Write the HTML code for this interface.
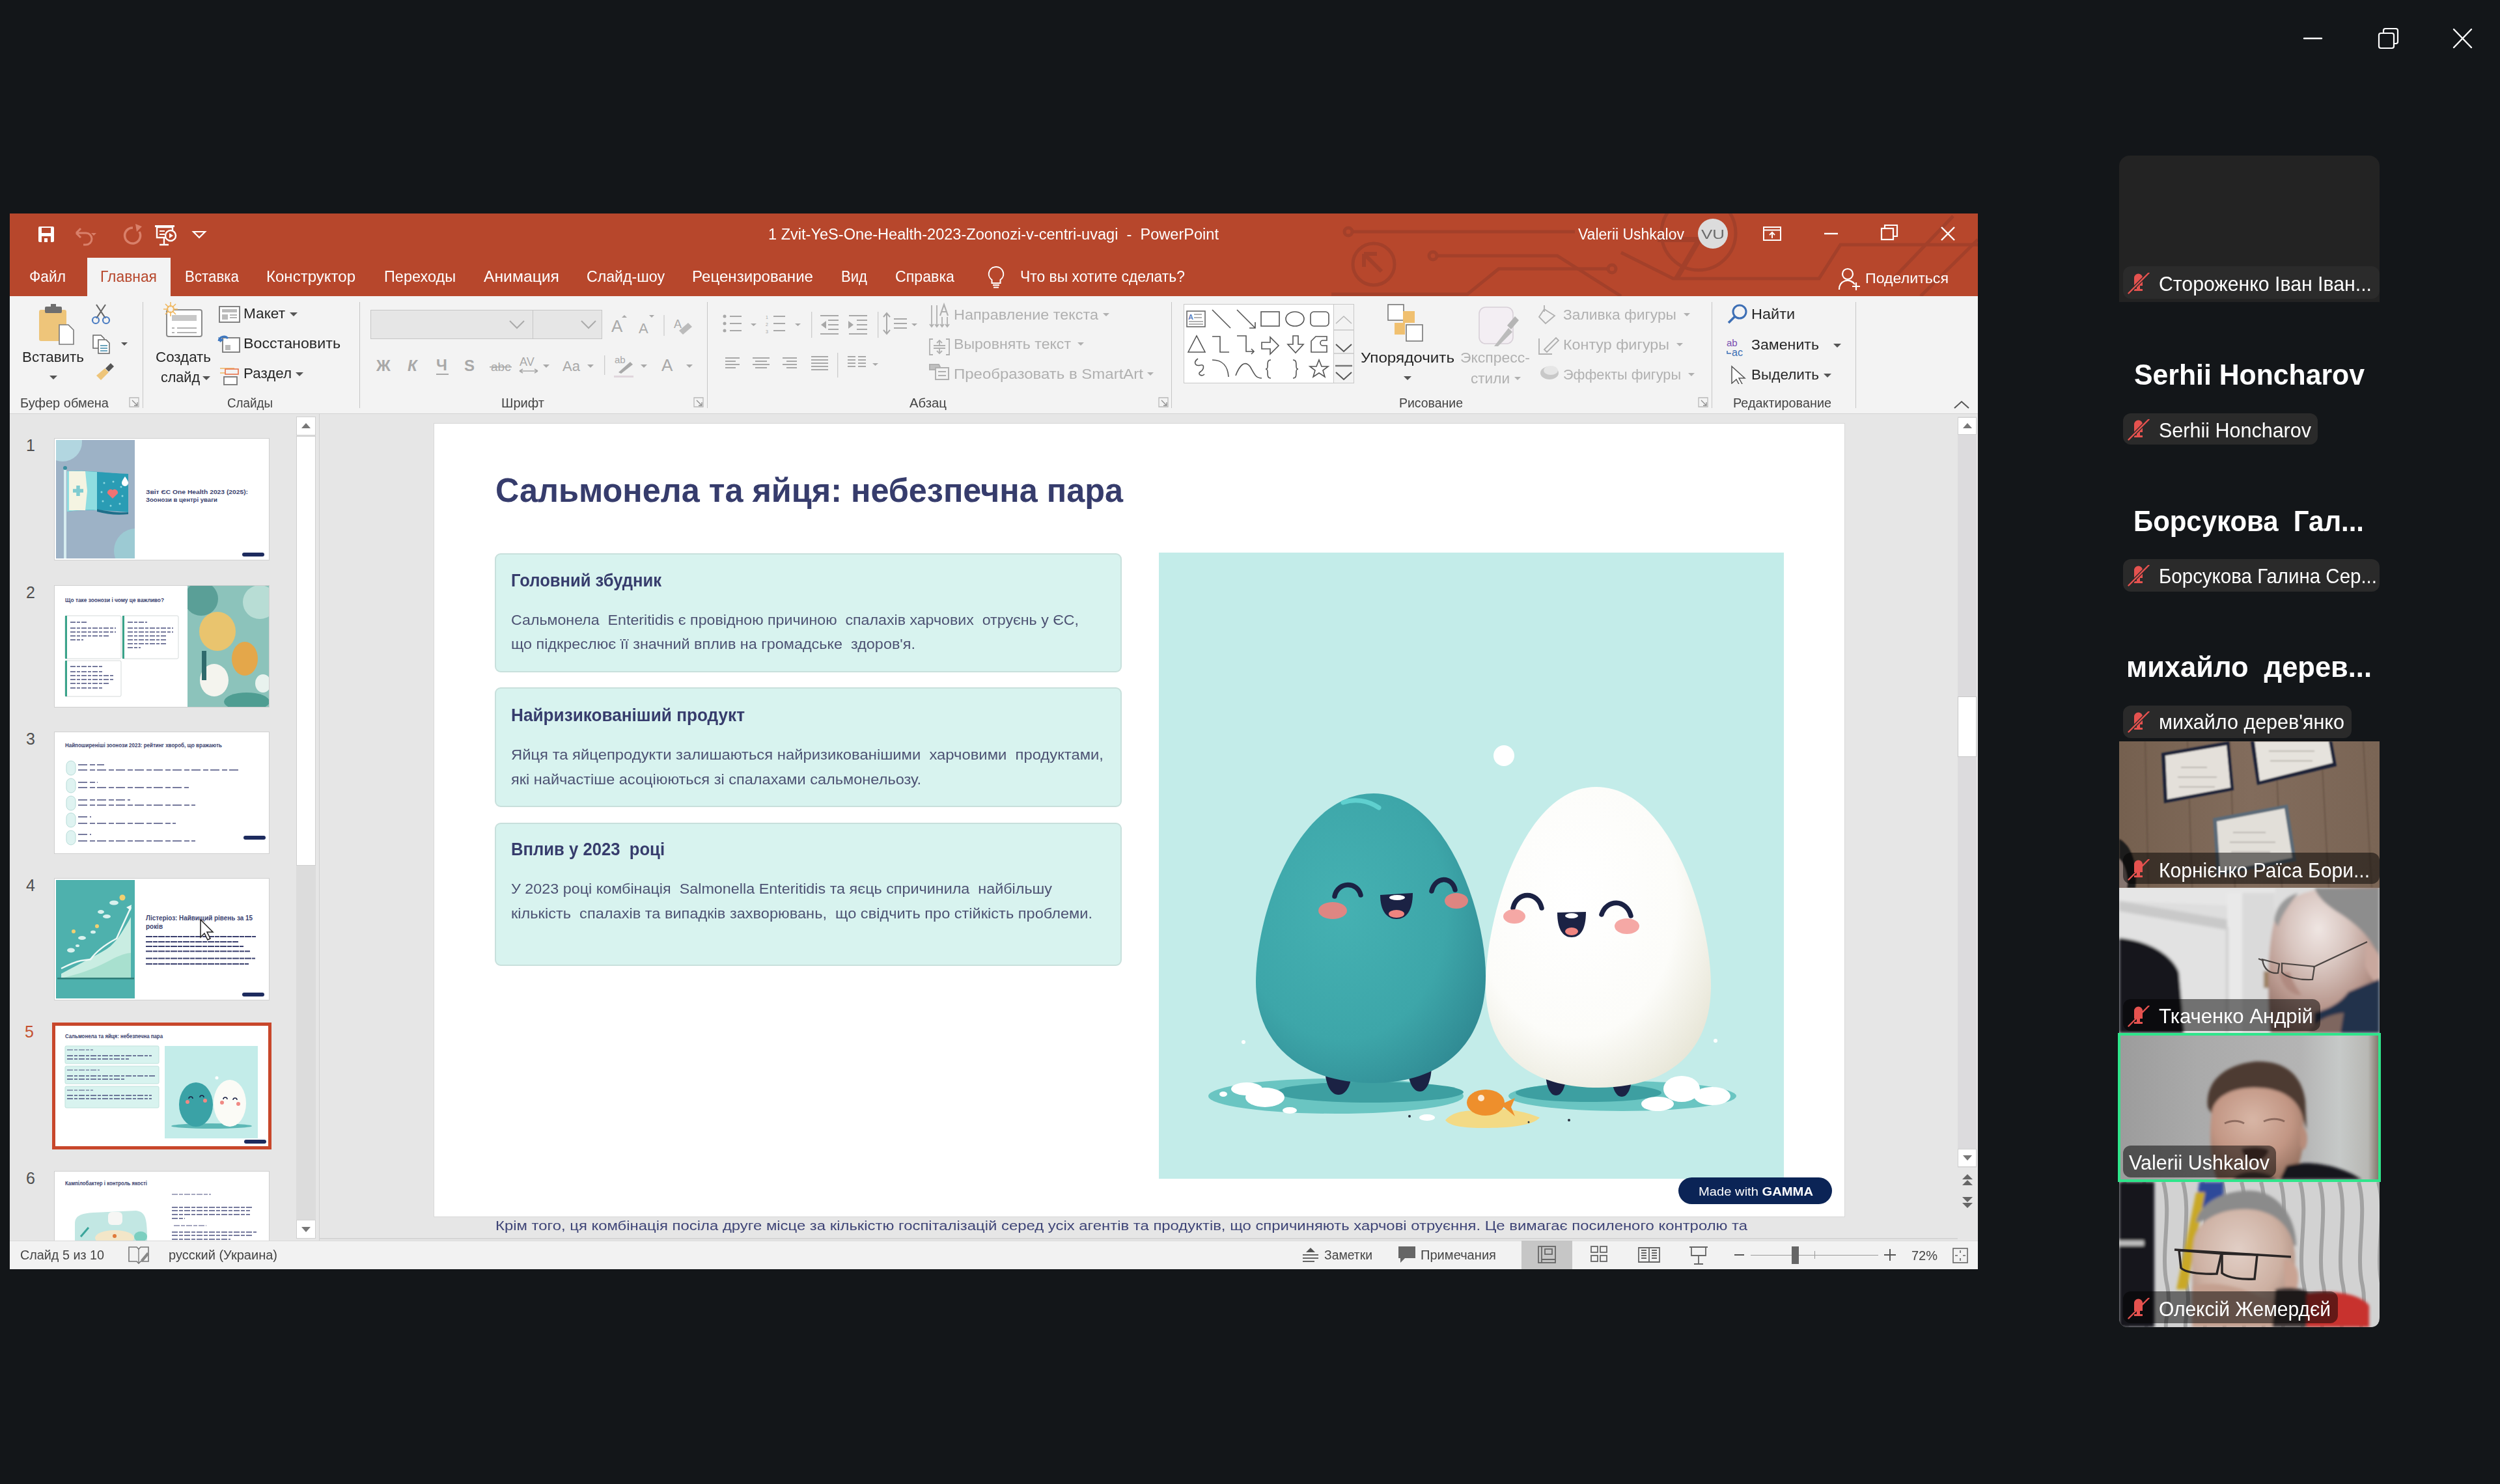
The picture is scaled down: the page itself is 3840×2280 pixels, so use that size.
<!DOCTYPE html><html><head><meta charset="utf-8"><style>
*{margin:0;padding:0;box-sizing:border-box}
html,body{width:3840px;height:2280px;overflow:hidden;background:#131619;font-family:"Liberation Sans", sans-serif}
.t{position:absolute;white-space:pre;transform-origin:0 50%}
#t1{transform:scaleX(1.0028)}#t2{transform:scaleX(0.9775)}#t3{transform:scaleX(1.2334)}#t4{transform:scaleX(0.9692)}#t5{transform:scaleX(0.9726)}#t6{transform:scaleX(0.9501)}#t7{transform:scaleX(1.0224)}#t8{transform:scaleX(0.9979)}#t9{transform:scaleX(1.0514)}#t10{transform:scaleX(0.9850)}#t11{transform:scaleX(1.0250)}#t12{transform:scaleX(0.9408)}#t13{transform:scaleX(0.9871)}#t14{transform:scaleX(0.9738)}#t15{transform:scaleX(1.0536)}#t16{transform:scaleX(1.0263)}#t17{transform:scaleX(0.9643)}#t18{transform:scaleX(1.0287)}#t19{transform:scaleX(1.0420)}#t20{transform:scaleX(0.9978)}#t21{transform:scaleX(1.0165)}#t22{transform:scaleX(1.0186)}#t23{transform:scaleX(1.0166)}#t24{transform:scaleX(0.9803)}#t25{transform:scaleX(1.0279)}#t26{transform:scaleX(1.0577)}#t27{transform:scaleX(1.0176)}#t28{transform:scaleX(1.0644)}#t29{transform:scaleX(1.0503)}#t30{transform:scaleX(1.0905)}#t31{transform:scaleX(1.0999)}#t32{transform:scaleX(1.0449)}#t33{transform:scaleX(1.0256)}#t34{transform:scaleX(1.0356)}#t35{transform:scaleX(1.0595)}#t36{transform:scaleX(0.9872)}#t37{transform:scaleX(1.0672)}#t38{transform:scaleX(1.0518)}#t39{transform:scaleX(1.0246)}#t46{transform:scaleX(0.9687)}#t47{transform:scaleX(0.9481)}#t48{transform:scaleX(1.0785)}#t49{transform:scaleX(1.0884)}#t50{transform:scaleX(0.9695)}#t51{transform:scaleX(1.1072)}#t52{transform:scaleX(1.0953)}#t53{transform:scaleX(0.9504)}#t54{transform:scaleX(1.0861)}#t55{transform:scaleX(1.0965)}#t56{transform:scaleX(1.0617)}#t57{transform:scaleX(1.2245)}#t58{transform:scaleX(1.0141)}#t59{transform:scaleX(1.0269)}#t60{transform:scaleX(0.9920)}#t61{transform:scaleX(1.0303)}#t62{transform:scaleX(0.9992)}#t63{transform:scaleX(0.9603)}#t64{transform:scaleX(0.9717)}#t65{transform:scaleX(0.9684)}#t66{transform:scaleX(0.9529)}#t67{transform:scaleX(0.9357)}#t68{transform:scaleX(0.9875)}#t69{transform:scaleX(0.9675)}#t70{transform:scaleX(0.9544)}#t71{transform:scaleX(0.9883)}#t72{transform:scaleX(0.9664)}#t73{transform:scaleX(0.9512)}</style></head><body><svg style="position:absolute;left:3530px;top:36px;" width="280" height="46" viewBox="0 0 280 46">
<line x1="9" y1="23" x2="36" y2="23" stroke="#fff" stroke-width="2.4" stroke-linecap="round"/>
<rect x="124" y="15" width="23" height="23" rx="3" fill="none" stroke="#fff" stroke-width="2.2"/>
<path d="M131 15 V11 a3 3 0 0 1 3 -3 H150 a3 3 0 0 1 3 3 V28 a3 3 0 0 1 -3 3 H147" fill="none" stroke="#fff" stroke-width="2.2"/>
<line x1="239" y1="9" x2="266" y2="37" stroke="#fff" stroke-width="2.4" stroke-linecap="round"/>
<line x1="266" y1="9" x2="239" y2="37" stroke="#fff" stroke-width="2.4" stroke-linecap="round"/>
</svg><div style="position:absolute;left:15px;top:328px;width:3023px;height:127px;background:#b7472c"></div><svg style="position:absolute;left:1950px;top:328px;" width="1088" height="127" viewBox="0 0 1088 127">
<g stroke="#a3402a" stroke-width="5" fill="none">
<path d="M127 28 H469"/><circle cx="121" cy="28" r="6"/>
<circle cx="160" cy="78" r="32"/>
<path d="M147 64 L172 89 M145 62 h20 M145 62 v20" stroke-width="6"/>
<path d="M257 65 H442 L540 127"/><circle cx="251" cy="65" r="6"/>
<path d="M95 124 H304 L352 85 H520"/><circle cx="526" cy="85" r="6"/>
<circle cx="659" cy="30" r="57"/>
<path d="M596 40 H660 L625 100" stroke-width="8"/>
<path d="M540 60 L620 100 H844 L877 48 H1088"/>
<path d="M958 100 L1050 4"/>
<path d="M1000 127 L1088 40"/>
</g></svg><div style="position:absolute;left:134px;top:396px;width:128px;height:60px;background:#f3f3f3"></div><div style="position:absolute;left:15px;top:455px;width:3023px;height:181px;background:#f3f3f3;border-bottom:1px solid #d4d4d4"></div><div style="position:absolute;left:15px;top:636px;width:3023px;height:1270px;background:#e6e6e6"></div><div style="position:absolute;left:15px;top:1906px;width:3023px;height:44px;background:#f2f2f2;border-top:1px solid #d9d9d9"></div><div class="t" id="t1" style="left:1180px;top:348.8px;font-size:23.5px;line-height:23.5px;color:#ffffff;font-weight:400;">1 Zvit-YeS-One-Health-2023-Zoonozi-v-centri-uvagi  -  PowerPoint</div><div class="t" id="t2" style="left:2424px;top:348.8px;font-size:23.5px;line-height:23.5px;color:#ffffff;font-weight:400;">Valerii Ushkalov</div><div style="position:absolute;left:2608px;top:336px;width:46px;height:46px;background:#dcdcdc;border-radius:50%"></div><div class="t" id="t3" style="left:2613px;top:348.5px;font-size:21px;line-height:21px;color:#6b6b6b;font-weight:400;">VU</div><svg style="position:absolute;left:2700px;top:336px;" width="320" height="46" viewBox="0 0 320 46">
<rect x="9" y="13" width="26" height="20" fill="none" stroke="#fff" stroke-width="2"/>
<line x1="9" y1="17.5" x2="35" y2="17.5" stroke="#fff" stroke-width="2"/>
<path d="M22 30 V21 M18 25 L22 21 L26 25" stroke="#fff" stroke-width="2" fill="none"/>
<line x1="102" y1="23" x2="123" y2="23" stroke="#fff" stroke-width="2.4"/>
<rect x="190" y="15" width="18" height="17" fill="none" stroke="#fff" stroke-width="2.2"/>
<path d="M195 15 V10 H214 V27 H208" fill="none" stroke="#fff" stroke-width="2.2"/>
<line x1="282" y1="13" x2="302" y2="33" stroke="#fff" stroke-width="2.4"/>
<line x1="302" y1="13" x2="282" y2="33" stroke="#fff" stroke-width="2.4"/>
</svg><svg style="position:absolute;left:40px;top:336px;" width="300" height="46" viewBox="0 0 300 46">
<rect x="19" y="12" width="24" height="24" rx="2" fill="#fff"/>
<rect x="24" y="14" width="14" height="8" fill="#b7472c"/>
<rect x="24" y="27" width="14" height="9" fill="#b7472c"/>
<rect x="28" y="30" width="5" height="6" fill="#fff"/>
<path d="M77 22 L84 15 M77 22 L84 29 M77 22 H92 a9 9 0 0 1 0 18 H88" stroke="#d9806a" stroke-width="3" fill="none"/>
<path d="M100 22 l4 4 l4 -4" fill="#d9806a"/>
<path d="M164 14 a12 12 0 1 0 10 6" stroke="#d9806a" stroke-width="3.5" fill="none"/>
<path d="M168 8 l2 12 l8 -8z" fill="#d9806a"/>
<rect x="198" y="10" width="30" height="3" fill="#fff"/>
<rect x="201" y="13" width="24" height="16" fill="none" stroke="#fff" stroke-width="2.4"/>
<path d="M205 19 h8 M205 24 h8" stroke="#fff" stroke-width="2"/>
<circle cx="222" cy="26" r="8" fill="#b7472c" stroke="#fff" stroke-width="2.4"/>
<path d="M220 22 v8 l6 -4z" fill="#fff"/>
<path d="M205 40 h14 M212 29 v11" stroke="#fff" stroke-width="2.4"/>
<path d="M257 20 h18 l-9 9z" fill="none" stroke="#fff" stroke-width="2.2"/>
</svg><div class="t" id="t4" style="left:45px;top:414.2px;font-size:23.5px;line-height:23.5px;color:#ffffff;font-weight:400;">Файл</div><div class="t" id="t5" style="left:154px;top:414.2px;font-size:23.5px;line-height:23.5px;color:#b7472c;font-weight:400;">Главная</div><div class="t" id="t6" style="left:284px;top:414.2px;font-size:23.5px;line-height:23.5px;color:#ffffff;font-weight:400;">Вставка</div><div class="t" id="t7" style="left:409px;top:414.2px;font-size:23.5px;line-height:23.5px;color:#ffffff;font-weight:400;">Конструктор</div><div class="t" id="t8" style="left:590px;top:414.2px;font-size:23.5px;line-height:23.5px;color:#ffffff;font-weight:400;">Переходы</div><div class="t" id="t9" style="left:743px;top:414.2px;font-size:23.5px;line-height:23.5px;color:#ffffff;font-weight:400;">Анимация</div><div class="t" id="t10" style="left:901px;top:414.2px;font-size:23.5px;line-height:23.5px;color:#ffffff;font-weight:400;">Слайд-шоу</div><div class="t" id="t11" style="left:1063px;top:414.2px;font-size:23.5px;line-height:23.5px;color:#ffffff;font-weight:400;">Рецензирование</div><div class="t" id="t12" style="left:1292px;top:414.2px;font-size:23.5px;line-height:23.5px;color:#ffffff;font-weight:400;">Вид</div><div class="t" id="t13" style="left:1375px;top:414.2px;font-size:23.5px;line-height:23.5px;color:#ffffff;font-weight:400;">Справка</div><div class="t" id="t14" style="left:1567px;top:414.2px;font-size:23.5px;line-height:23.5px;color:#ffffff;font-weight:400;">Что вы хотите сделать?</div><svg style="position:absolute;left:1510px;top:405px;" width="40" height="42" viewBox="0 0 40 42">
<path d="M20 5 a11 11 0 0 0 -6.5 20 v5 h13 v-5 a11 11 0 0 0 -6.5 -20z" fill="none" stroke="#fff" stroke-width="2"/>
<path d="M15 33 h10 M16 36.5 h8" stroke="#fff" stroke-width="2"/>
</svg><svg style="position:absolute;left:2822px;top:410px;" width="40" height="38" viewBox="0 0 40 38">
<circle cx="16" cy="11" r="8" fill="none" stroke="#fff" stroke-width="2.2"/>
<path d="M3 35 a13 13 0 0 1 24 -8" fill="none" stroke="#fff" stroke-width="2.2"/>
<path d="M29 24 v12 M23 30 h12" stroke="#fff" stroke-width="2.2"/>
</svg><div class="t" id="t15" style="left:2865px;top:417.0px;font-size:22px;line-height:22px;color:#ffffff;font-weight:400;">Поделиться</div><div style="position:absolute;left:219px;top:464px;width:1px;height:163px;background:#c6c6c6"></div><div style="position:absolute;left:552px;top:464px;width:1px;height:163px;background:#c6c6c6"></div><div style="position:absolute;left:1086px;top:464px;width:1px;height:163px;background:#c6c6c6"></div><div style="position:absolute;left:1799px;top:464px;width:1px;height:163px;background:#c6c6c6"></div><div style="position:absolute;left:2629px;top:464px;width:1px;height:163px;background:#c6c6c6"></div><div style="position:absolute;left:2850px;top:464px;width:1px;height:163px;background:#c6c6c6"></div><div class="t" id="t16" style="left:31px;top:610.2px;font-size:19.5px;line-height:19.5px;color:#444444;font-weight:400;">Буфер обмена</div><div class="t" id="t17" style="left:349px;top:610.2px;font-size:19.5px;line-height:19.5px;color:#444444;font-weight:400;">Слайды</div><div class="t" id="t18" style="left:770px;top:610.2px;font-size:19.5px;line-height:19.5px;color:#444444;font-weight:400;">Шрифт</div><div class="t" id="t19" style="left:1397px;top:610.2px;font-size:19.5px;line-height:19.5px;color:#444444;font-weight:400;">Абзац</div><div class="t" id="t20" style="left:2149px;top:610.2px;font-size:19.5px;line-height:19.5px;color:#444444;font-weight:400;">Рисование</div><div class="t" id="t21" style="left:2662px;top:610.2px;font-size:19.5px;line-height:19.5px;color:#444444;font-weight:400;">Редактирование</div><svg style="position:absolute;left:198px;top:610px;" width="16" height="16" viewBox="0 0 16 16"><path d="M1 1 h14 v14 h-14z" fill="none" stroke="#b9b9b9" stroke-width="1.3"/><path d="M5 5 L13 13 M13 8 v5 h-5" stroke="#8d8d8d" stroke-width="1.3" fill="none"/></svg><svg style="position:absolute;left:1065px;top:610px;" width="16" height="16" viewBox="0 0 16 16"><path d="M1 1 h14 v14 h-14z" fill="none" stroke="#b9b9b9" stroke-width="1.3"/><path d="M5 5 L13 13 M13 8 v5 h-5" stroke="#8d8d8d" stroke-width="1.3" fill="none"/></svg><svg style="position:absolute;left:1779px;top:610px;" width="16" height="16" viewBox="0 0 16 16"><path d="M1 1 h14 v14 h-14z" fill="none" stroke="#b9b9b9" stroke-width="1.3"/><path d="M5 5 L13 13 M13 8 v5 h-5" stroke="#8d8d8d" stroke-width="1.3" fill="none"/></svg><svg style="position:absolute;left:2608px;top:610px;" width="16" height="16" viewBox="0 0 16 16"><path d="M1 1 h14 v14 h-14z" fill="none" stroke="#b9b9b9" stroke-width="1.3"/><path d="M5 5 L13 13 M13 8 v5 h-5" stroke="#8d8d8d" stroke-width="1.3" fill="none"/></svg><svg style="position:absolute;left:55px;top:465px;" width="80" height="70" viewBox="0 0 80 70">
<rect x="5" y="11" width="42" height="48" rx="3" fill="#eec57a"/>
<rect x="14" y="6" width="26" height="10" rx="2" fill="#6e6e6e"/>
<rect x="23" y="2" width="8" height="6" fill="#6e6e6e"/>
<path d="M36 34 h14 l8 8 v22 h-22z" fill="#fff" stroke="#7a7a7a" stroke-width="1.6"/>
</svg><div class="t" id="t22" style="left:34px;top:538.0px;font-size:22px;line-height:22px;color:#262626;font-weight:400;">Вставить</div><svg style="position:absolute;left:74px;top:574px;" width="16" height="12" viewBox="0 0 16 12"><path d="M2 3 h12 l-6 6z" fill="#555"/></svg><svg style="position:absolute;left:138px;top:465px;" width="70" height="125" viewBox="0 0 70 125">
<path d="M10 3 L24 24 M24 3 L10 24" stroke="#666" stroke-width="2.2"/>
<circle cx="9" cy="27" r="5" fill="none" stroke="#4a7cc2" stroke-width="2.2"/>
<circle cx="25" cy="27" r="5" fill="none" stroke="#4a7cc2" stroke-width="2.2"/>
<path d="M5 50 h12 l5 5 v15 h-17z" fill="#fff" stroke="#666" stroke-width="1.5"/>
<path d="M13 57 h12 l5 5 v16 h-17z" fill="#fff" stroke="#666" stroke-width="1.5"/>
<path d="M16 66 h11 M16 70 h11 M16 74 h11" stroke="#3b87a8" stroke-width="1.3"/>
<path d="M48 61 h10 l-5 5z" fill="#555"/>
<path d="M10 112 l13 -11 l6 6 l-12 12z" fill="#eec57a"/>
<path d="M24 101 l8 -8 l5 5 l-8 8z" fill="#555"/>
</svg><svg style="position:absolute;left:245px;top:462px;" width="80" height="65" viewBox="0 0 80 65">
<rect x="11" y="14" width="54" height="41" rx="3" fill="#fff" stroke="#8a8a8a" stroke-width="2"/>
<rect x="19" y="22" width="38" height="9" fill="#c8c8c8"/>
<path d="M19 42 h4 M27 42 h30 M19 49 h4 M27 49 h30" stroke="#9a9a9a" stroke-width="1.6"/>
<circle cx="17" cy="13" r="5" fill="#f3f3f3" stroke="#f0b860" stroke-width="2"/>
<path d="M17 2 v22 M6 13 h22 M9 5 l16 16 M25 5 l-16 16" stroke="#f0b860" stroke-width="1.6"/>
<circle cx="17" cy="13" r="3.5" fill="#f3f3f3"/>
</svg><div class="t" id="t23" style="left:239px;top:538.0px;font-size:22px;line-height:22px;color:#262626;font-weight:400;">Создать</div><div class="t" id="t24" style="left:247px;top:569.0px;font-size:22px;line-height:22px;color:#262626;font-weight:400;">слайд</div><svg style="position:absolute;left:310px;top:576px;" width="14" height="10" viewBox="0 0 14 10"><path d="M1 2 h12 l-6 6z" fill="#555"/></svg><svg style="position:absolute;left:334px;top:468px;" width="38" height="125" viewBox="0 0 38 125">
<rect x="3" y="3" width="31" height="24" fill="#fff" stroke="#777" stroke-width="1.8"/>
<rect x="7" y="7" width="23" height="5" fill="#bbb"/><rect x="7" y="15" width="9" height="8" fill="#bbb"/>
<path d="M19 16 h11 M19 20 h11" stroke="#999" stroke-width="1.5"/>
<rect x="8" y="51" width="26" height="22" fill="#fff" stroke="#777" stroke-width="1.8"/>
<path d="M2 56 a8 8 0 0 1 14 -4" stroke="#3f78c0" stroke-width="3" fill="none"/>
<path d="M1 50 l3 8 l6 -4z" fill="#3f78c0"/>
<rect x="12" y="62" width="8" height="8" fill="#bbb"/>
<path d="M4 98 h22 M4 105 h8" stroke="#f0b860" stroke-width="1.6"/>
<rect x="12" y="99" width="20" height="8" fill="none" stroke="#e8734a" stroke-width="1.6"/>
<rect x="10" y="111" width="20" height="12" fill="#fff" stroke="#777" stroke-width="1.8"/>
</svg><div class="t" id="t25" style="left:374px;top:471.0px;font-size:22px;line-height:22px;color:#262626;font-weight:400;">Макет</div><svg style="position:absolute;left:444px;top:478px;" width="14" height="10" viewBox="0 0 14 10"><path d="M1 2 h12 l-6 6z" fill="#555"/></svg><div class="t" id="t26" style="left:374px;top:517.0px;font-size:22px;line-height:22px;color:#262626;font-weight:400;">Восстановить</div><div class="t" id="t27" style="left:374px;top:563.0px;font-size:22px;line-height:22px;color:#262626;font-weight:400;">Раздел</div><svg style="position:absolute;left:453px;top:570px;" width="14" height="10" viewBox="0 0 14 10"><path d="M1 2 h12 l-6 6z" fill="#555"/></svg><div style="position:absolute;left:569px;top:476px;width:250px;height:45px;background:#e6e6e6;border:1.5px solid #c6c6c6"></div><div style="position:absolute;left:818px;top:476px;width:107px;height:45px;background:#e6e6e6;border:1.5px solid #c6c6c6"></div><svg style="position:absolute;left:780px;top:490px;" width="30" height="20" viewBox="0 0 30 20"><path d="M3 3 L14 14 L25 3" fill="none" stroke="#aaa" stroke-width="2"/></svg><svg style="position:absolute;left:890px;top:490px;" width="30" height="20" viewBox="0 0 30 20"><path d="M3 3 L14 14 L25 3" fill="none" stroke="#aaa" stroke-width="2"/></svg><svg style="position:absolute;left:935px;top:480px;" width="140" height="40" viewBox="0 0 140 40">
<text x="4" y="30" font-size="26" fill="#aaa" font-family="Liberation Sans">A</text>
<path d="M20 8 l4 -4 l4 4z" fill="#aaa"/>
<text x="46" y="32" font-size="22" fill="#aaa" font-family="Liberation Sans">A</text>
<path d="M62 4 h8 l-4 4z" fill="#aaa"/>
<line x1="85" y1="4" x2="85" y2="36" stroke="#ccc" stroke-width="1.3"/>
<text x="100" y="24" font-size="18" fill="#aaa" font-family="Liberation Sans">A</text>
<path d="M108 28 l14 -12 l6 6 l-14 12z" fill="#bbb"/>
</svg><svg style="position:absolute;left:570px;top:540px;" width="500" height="40" viewBox="0 0 500 40">
<g fill="#a8a8a8" font-family="Liberation Sans">
<text x="8" y="30" font-size="24" font-weight="bold">Ж</text>
<text x="56" y="30" font-size="24" font-weight="bold" font-style="italic">К</text>
<text x="100" y="29" font-size="24" font-weight="bold">Ч</text>
<rect x="100" y="34" width="19" height="2"/>
<text x="143" y="30" font-size="24" font-weight="bold">S</text>
<text x="184" y="30" font-size="19">abc</text>
<rect x="182" y="23" width="34" height="1.6"/>
<text x="228" y="22" font-size="18">AV</text>
<path d="M228 30 h28 M228 30 l5 -3 M228 30 l5 3 M256 30 l-5 -3 M256 30 l-5 3" stroke="#a8a8a8" stroke-width="1.5" fill="none"/>
<path d="M264 20 h10 l-5 5z"/>
<text x="294" y="30" font-size="22">Aa</text>
<path d="M332 20 h10 l-5 5z"/>
<rect x="358" y="6" width="1.3" height="30" fill="#ccc"/>
<text x="374" y="18" font-size="15">ab</text>
<path d="M380 32 l18 -16 l4 4 l-18 14z"/>
<rect x="373" y="37" width="30" height="3" fill="#e0d6dc"/>
<path d="M414 20 h10 l-5 5z"/>
<text x="446" y="30" font-size="26">A</text>
<path d="M484 20 h10 l-5 5z"/>
</g></svg><svg style="position:absolute;left:1100px;top:470px;" width="700" height="110" viewBox="0 0 700 110">
<g stroke="#a8a8a8" stroke-width="2" fill="#a8a8a8">
<circle cx="13" cy="16" r="2.5" stroke="none"/><circle cx="13" cy="27" r="2.5" stroke="none"/><circle cx="13" cy="38" r="2.5" stroke="none"/>
<path d="M21 16 h18 M21 27 h18 M21 38 h18" fill="none"/>
<path d="M53 27 h9 l-4.5 4z" stroke="none"/>
<text x="76" y="20" font-size="7" stroke="none" font-family="Liberation Sans">1</text>
<text x="76" y="31" font-size="7" stroke="none" font-family="Liberation Sans">2</text>
<text x="76" y="42" font-size="7" stroke="none" font-family="Liberation Sans">3</text>
<path d="M88 16 h18 M88 27 h18 M88 38 h18" fill="none"/>
<path d="M121 27 h9 l-4.5 4z" stroke="none"/>
<rect x="146" y="9" width="1.3" height="40" stroke="none" fill="#ccc"/>
<path d="M160 15 h28 M172 22 h16 M172 29 h16 M172 36 h16 M160 43 h28" fill="none"/>
<path d="M161 29 l8 -6 v12z" stroke="none"/>
<path d="M204 15 h28 M216 22 h16 M216 29 h16 M216 36 h16 M204 43 h28" fill="none"/>
<path d="M211 29 l-8 -6 v12z" stroke="none"/>
<rect x="248" y="9" width="1.3" height="40" stroke="none" fill="#ccc"/>
<path d="M262 12 v30 M257 17 l5 -6 l5 6 M257 37 l5 6 l5 -6" fill="none"/>
<path d="M273 20 h20 M273 27 h20 M273 34 h20" fill="none"/>
<path d="M300 27 h9 l-4.5 4z" stroke="none"/>
<path d="M14 80 h22 M14 85 h16 M14 90 h22 M14 95 h16" fill="none"/>
<path d="M56 80 h26 M60 85 h18 M56 90 h26 M60 95 h18" fill="none"/>
<path d="M102 80 h22 M108 85 h16 M102 90 h22 M108 95 h16" fill="none"/>
<path d="M146 78 h26 M146 83 h26 M146 88 h26 M146 93 h26 M146 98 h26" fill="none"/>
<rect x="186" y="72" width="1.3" height="40" stroke="none" fill="#ccc"/>
<path d="M202 78 h12 M202 83 h12 M202 88 h12 M202 93 h12 M218 78 h12 M218 83 h12 M218 88 h12 M218 93 h12" fill="none"/>
<path d="M240 88 h9 l-4.5 4z" stroke="none"/>
</g></svg><svg style="position:absolute;left:1425px;top:465px;" width="40" height="130" viewBox="0 0 40 130">
<g stroke="#b0b0b0" stroke-width="2" fill="none">
<path d="M6 4 v32 M14 4 v32 M22 22 v14 M30 22 v14 M3 33 l3 4 l3 -4 M11 33 l3 4 l3 -4 M19 33 l3 4 l3 -4 M27 33 l3 4 l3 -4" stroke-width="1.8"/>
<path d="M19 20 L25 3 L31 20 M21 14 h8" stroke-width="2.2"/>
<path d="M8 56 h-5 v24 h5 M28 56 h5 v24 h-5" stroke-width="1.8"/>
<path d="M18 58 v8 M14 62 l4 -4 l4 4 M18 70 v8 M14 74 l4 4 l4 -4 M9 66 h18 M9 70 h18" stroke-width="1.8"/>
<path d="M3 95 h14 l4 8 h-18z" fill="#c0c0c0"/>
<rect x="12" y="100" width="20" height="18" fill="#f3f3f3"/>
<path d="M16 106 h12 M16 112 h12"/>
</g></svg><div class="t" id="t28" style="left:1465px;top:473.0px;font-size:22px;line-height:22px;color:#b0b0b0;font-weight:400;">Направление текста</div><div class="t" id="t29" style="left:1465px;top:518.0px;font-size:22px;line-height:22px;color:#b0b0b0;font-weight:400;">Выровнять текст</div><div class="t" id="t30" style="left:1465px;top:564.0px;font-size:22px;line-height:22px;color:#b0b0b0;font-weight:400;">Преобразовать в SmartArt</div><svg style="position:absolute;left:1693px;top:480px;" width="12" height="8" viewBox="0 0 12 8"><path d="M1 1 h10 l-5 5z" fill="#b0b0b0"/></svg><svg style="position:absolute;left:1654px;top:525px;" width="12" height="8" viewBox="0 0 12 8"><path d="M1 1 h10 l-5 5z" fill="#b0b0b0"/></svg><svg style="position:absolute;left:1761px;top:571px;" width="12" height="8" viewBox="0 0 12 8"><path d="M1 1 h10 l-5 5z" fill="#b0b0b0"/></svg><div style="position:absolute;left:1818px;top:467px;width:231px;height:122px;background:#fff;border:1.5px solid #c8c8c8"></div><div style="position:absolute;left:2048px;top:467px;width:32px;height:122px;background:#f3f3f3;border:1.5px solid #c8c8c8"></div><svg style="position:absolute;left:1818px;top:467px;" width="262" height="122" viewBox="0 0 262 122">
<g stroke="#555" stroke-width="1.6" fill="none">
<rect x="5" y="11" width="28" height="24" stroke="#666"/><path d="M16 16 h12 M16 21 h12 M8 27 h22 M8 31 h22" stroke="#999"/>
<text x="7" y="24" font-size="11" font-weight="bold" fill="#5a7ec0" stroke="none" font-family="Liberation Sans">A</text>
<path d="M44 9 L72 37"/>
<path d="M82 9 L110 37 M101 37 h9 v-9"/>
<rect x="119" y="12" width="28" height="22"/>
<ellipse cx="171" cy="23" rx="14" ry="11"/>
<rect x="195" y="12" width="28" height="22" rx="5"/>
<path d="M7 74 L20 49 L33 74z"/>
<path d="M44 50 h12 v24 h14"/>
<path d="M82 49 h14 v24 h12 M104 69 l4 4 l-4 4"/>
<path d="M120 59 h13 v-8 l13 13 l-13 13 v-8 h-13z"/>
<path d="M168 49 h8 v13 h8 l-12 13 l-12 -13 h8z"/>
<path d="M196 57 l7 -7 h17 v6 h-6 a4 4 0 0 0 0 8 h6 v10 h-24z"/>
<path d="M22 84 c-8 6 -4 12 4 10 c6 -2 6 6 0 10 c-6 4 2 8 6 4"/>
<path d="M44 86 c16 0 24 10 25 26"/>
<path d="M80 110 c6 -16 14 -24 22 -14 c6 10 8 18 18 18"/>
<path d="M134 86 c-5 0 -5 4 -5 10 c0 4 -3 4 -3 4 c0 0 3 0 3 4 c0 6 0 10 5 10"/>
<path d="M168 86 c5 0 5 4 5 10 c0 4 3 4 3 4 c0 0 -3 0 -3 4 c0 6 0 10 -5 10"/>
<path d="M208 86 l4 10 h10 l-8 6 l3 10 l-9 -6 l-9 6 l3 -10 l-8 -6 h10z"/>
</g>
<g stroke="#555" stroke-width="2" fill="none">
<path d="M234 30 l12 -11 l12 11" stroke="#b8b8b8" stroke-width="1.6"/>
<path d="M234 62 l12 11 l12 -11"/>
<path d="M234 105 l12 11 l12 -11"/>
</g>
<path d="M231 40 h31 M231 76 h31" stroke="#c8c8c8" stroke-width="1.3"/>
<path d="M233 95 h26" stroke="#777" stroke-width="2.5"/>
</svg><svg style="position:absolute;left:2130px;top:466px;" width="62" height="64" viewBox="0 0 62 64">
<rect x="2" y="2" width="24" height="24" fill="#fff" stroke="#777" stroke-width="1.6"/>
<rect x="25" y="12" width="18" height="18" fill="#f0c070"/>
<rect x="12" y="30" width="16" height="18" fill="#f0c070"/>
<rect x="30" y="33" width="25" height="25" fill="#fff" stroke="#777" stroke-width="1.6"/>
</svg><div class="t" id="t31" style="left:2090px;top:539.0px;font-size:22px;line-height:22px;color:#262626;font-weight:400;">Упорядочить</div><svg style="position:absolute;left:2155px;top:576px;" width="14" height="10" viewBox="0 0 14 10"><path d="M1 2 h12 l-6 6z" fill="#555"/></svg><svg style="position:absolute;left:2265px;top:470px;" width="72" height="65" viewBox="0 0 72 65">
<rect x="7" y="2" width="52" height="56" rx="10" fill="#f3eef3" stroke="#d8d0d8" stroke-width="1.6"/>
<path d="M30 62 l22 -28 l6 6 l-22 22z" fill="#bbb"/>
<path d="M50 30 l12 -14 l6 6 l-12 14z" fill="#b5b5b5"/>
</svg><div class="t" id="t32" style="left:2243px;top:539.0px;font-size:22px;line-height:22px;color:#b0b0b0;font-weight:400;">Экспресс-</div><div class="t" id="t33" style="left:2259px;top:571.0px;font-size:22px;line-height:22px;color:#b0b0b0;font-weight:400;">стили</div><svg style="position:absolute;left:2325px;top:578px;" width="12" height="8" viewBox="0 0 12 8"><path d="M1 1 h10 l-5 5z" fill="#b0b0b0"/></svg><svg style="position:absolute;left:2360px;top:465px;" width="40" height="125" viewBox="0 0 40 125">
<g stroke="#b0b0b0" stroke-width="1.8" fill="none">
<path d="M12 10 l-8 12 l10 10 l14 -12z M12 4 v10"/>
<path d="M4 55 v24 h20 M12 72 l18 -18 l4 4 l-18 18z"/>
</g>
<ellipse cx="20" cy="108" rx="14" ry="10" fill="#c8c8c8"/><ellipse cx="22" cy="104" rx="11" ry="7" fill="#e6e6e6"/>
</svg><div class="t" id="t34" style="left:2401px;top:473.0px;font-size:22px;line-height:22px;color:#b0b0b0;font-weight:400;">Заливка фигуры</div><div class="t" id="t35" style="left:2401px;top:519.0px;font-size:22px;line-height:22px;color:#b0b0b0;font-weight:400;">Контур фигуры</div><div class="t" id="t36" style="left:2401px;top:565.0px;font-size:22px;line-height:22px;color:#b0b0b0;font-weight:400;">Эффекты фигуры</div><svg style="position:absolute;left:2585px;top:480px;" width="12" height="8" viewBox="0 0 12 8"><path d="M1 1 h10 l-5 5z" fill="#b0b0b0"/></svg><svg style="position:absolute;left:2574px;top:526px;" width="12" height="8" viewBox="0 0 12 8"><path d="M1 1 h10 l-5 5z" fill="#b0b0b0"/></svg><svg style="position:absolute;left:2592px;top:572px;" width="12" height="8" viewBox="0 0 12 8"><path d="M1 1 h10 l-5 5z" fill="#b0b0b0"/></svg><svg style="position:absolute;left:2650px;top:465px;" width="40" height="125" viewBox="0 0 40 125">
<circle cx="22" cy="14" r="10" fill="none" stroke="#3d6fb5" stroke-width="3"/>
<path d="M15 21 L5 31" stroke="#3d6fb5" stroke-width="3.5"/>
<text x="2" y="67" font-size="15" fill="#7a4fb0" font-family="Liberation Sans">ab</text>
<text x="10" y="82" font-size="16" fill="#3d6fb5" font-family="Liberation Sans">ac</text>
<path d="M3 74 v4 h6" stroke="#3d6fb5" stroke-width="1.5" fill="none"/>
<path d="M10 98 v26 l7 -6 l5 9 l4 -2 l-5 -9 h9z" fill="#fff" stroke="#555" stroke-width="1.5"/>
</svg><div class="t" id="t37" style="left:2690px;top:472.0px;font-size:22px;line-height:22px;color:#262626;font-weight:400;">Найти</div><div class="t" id="t38" style="left:2690px;top:519.0px;font-size:22px;line-height:22px;color:#262626;font-weight:400;">Заменить</div><svg style="position:absolute;left:2815px;top:526px;" width="14" height="10" viewBox="0 0 14 10"><path d="M1 2 h12 l-6 6z" fill="#555"/></svg><div class="t" id="t39" style="left:2690px;top:565.0px;font-size:22px;line-height:22px;color:#262626;font-weight:400;">Выделить</div><svg style="position:absolute;left:2800px;top:572px;" width="14" height="10" viewBox="0 0 14 10"><path d="M1 2 h12 l-6 6z" fill="#555"/></svg><svg style="position:absolute;left:3000px;top:614px;" width="26" height="16" viewBox="0 0 26 16"><path d="M2 13 L13 3 L24 13" fill="none" stroke="#555" stroke-width="2"/></svg><div style="position:absolute;left:490px;top:636px;width:1px;height:1270px;background:#d0d0d0"></div><div style="position:absolute;left:455px;top:640px;width:30px;height:1262px;background:#dcdcdc"></div><div style="position:absolute;left:455px;top:640px;width:30px;height:29px;background:#fff;border:1px solid #d0d0d0"></div><svg style="position:absolute;left:462px;top:648px;" width="16" height="12" viewBox="0 0 16 12"><path d="M1 10 L8 2 L15 10z" fill="#777"/></svg><div style="position:absolute;left:455px;top:670px;width:30px;height:660px;background:#fff;border:1px solid #d0d0d0"></div><div style="position:absolute;left:455px;top:1874px;width:30px;height:29px;background:#fff;border:1px solid #d0d0d0"></div><svg style="position:absolute;left:462px;top:1883px;" width="16" height="12" viewBox="0 0 16 12"><path d="M1 2 L8 10 L15 2z" fill="#777"/></svg><div class="t" id="t40" style="left:40px;top:671.5px;font-size:25px;line-height:25px;color:#505050;font-weight:400;">1</div><div class="t" id="t41" style="left:40px;top:897.5px;font-size:25px;line-height:25px;color:#505050;font-weight:400;">2</div><div class="t" id="t42" style="left:40px;top:1122.5px;font-size:25px;line-height:25px;color:#505050;font-weight:400;">3</div><div class="t" id="t43" style="left:40px;top:1347.5px;font-size:25px;line-height:25px;color:#505050;font-weight:400;">4</div><div class="t" id="t44" style="left:40px;top:1797.5px;font-size:25px;line-height:25px;color:#505050;font-weight:400;">6</div><div class="t" id="t45" style="left:38px;top:1572.5px;font-size:25px;line-height:25px;color:#c4502e;font-weight:400;">5</div><div style="position:absolute;left:3007px;top:640px;width:29px;height:1154px;background:#dcdbdd"></div><div style="position:absolute;left:3007px;top:641px;width:29px;height:27px;background:#fff;border:1px solid #d0d0d0"></div><svg style="position:absolute;left:3014px;top:648px;" width="16" height="12" viewBox="0 0 16 12"><path d="M1 10 L8 2 L15 10z" fill="#777"/></svg><div style="position:absolute;left:3007px;top:1070px;width:29px;height:93px;background:#fff;border:1px solid #c8c8c8"></div><div style="position:absolute;left:3007px;top:1765px;width:29px;height:28px;background:#fff;border:1px solid #d0d0d0"></div><svg style="position:absolute;left:3014px;top:1773px;" width="16" height="12" viewBox="0 0 16 12"><path d="M1 2 L8 10 L15 2z" fill="#777"/></svg><svg style="position:absolute;left:3008px;top:1800px;" width="28" height="60" viewBox="0 0 28 60">
<path d="M6 12 L14 4 L22 12z M6 21 L14 13 L22 21z" fill="#666"/>
<path d="M6 39 L14 47 L22 39z M6 48 L14 56 L22 48z" fill="#666"/>
</svg><div style="position:absolute;left:666px;top:650px;width:2168px;height:1220px;background:#fff;border:1px solid #d8d8d8"></div><div class="t" id="t46" style="left:761px;top:727.0px;font-size:52px;line-height:52px;color:#363c6c;font-weight:700;">Сальмонела та яйця: небезпечна пара</div><div style="position:absolute;left:760px;top:850px;width:963px;height:183px;background:#d8f3ef;border:2px solid #c8e0dc;border-radius:9px"></div><div class="t" id="t47" style="left:785px;top:878.5px;font-size:27px;line-height:27px;color:#363c6c;font-weight:700;">Головний збудник</div><div class="t" id="t48" style="left:785px;top:942.8px;font-size:21.5px;line-height:21.5px;color:#4d5273;font-weight:400;">Сальмонела  Enteritidis є провідною причиною  спалахів харчових  отруєнь у ЄС,</div><div class="t" id="t49" style="left:785px;top:979.8px;font-size:21.5px;line-height:21.5px;color:#4d5273;font-weight:400;">що підкреслює її значний вплив на громадське  здоров'я.</div><div style="position:absolute;left:760px;top:1056px;width:963px;height:184px;background:#d8f3ef;border:2px solid #c8e0dc;border-radius:9px"></div><div class="t" id="t50" style="left:785px;top:1085.5px;font-size:27px;line-height:27px;color:#363c6c;font-weight:700;">Найризикованіший продукт</div><div class="t" id="t51" style="left:785px;top:1149.8px;font-size:21.5px;line-height:21.5px;color:#4d5273;font-weight:400;">Яйця та яйцепродукти залишаються найризикованішими  харчовими  продуктами,</div><div class="t" id="t52" style="left:785px;top:1187.8px;font-size:21.5px;line-height:21.5px;color:#4d5273;font-weight:400;">які найчастіше асоціюються зі спалахами сальмонельозу.</div><div style="position:absolute;left:760px;top:1264px;width:963px;height:220px;background:#d8f3ef;border:2px solid #c8e0dc;border-radius:9px"></div><div class="t" id="t53" style="left:785px;top:1291.5px;font-size:27px;line-height:27px;color:#363c6c;font-weight:700;">Вплив у 2023  році</div><div class="t" id="t54" style="left:785px;top:1355.8px;font-size:21.5px;line-height:21.5px;color:#4d5273;font-weight:400;">У 2023 році комбінація  Salmonella Enteritidis та яєць спричинила  найбільшу</div><div class="t" id="t55" style="left:785px;top:1393.8px;font-size:21.5px;line-height:21.5px;color:#4d5273;font-weight:400;">кількість  спалахів та випадків захворювань,  що свідчить про стійкість проблеми.</div><svg style="position:absolute;left:1780px;top:849px;" width="960" height="962" viewBox="0 0 960 962">
<defs>
<radialGradient id="teal" cx="0.38" cy="0.4" r="0.75">
<stop offset="0" stop-color="#45b1b2"/><stop offset="0.6" stop-color="#3da6a9"/><stop offset="1" stop-color="#2e8690"/>
</radialGradient>
<radialGradient id="wht" cx="0.4" cy="0.38" r="0.75">
<stop offset="0" stop-color="#ffffff"/><stop offset="0.6" stop-color="#fcfcf9"/><stop offset="1" stop-color="#e5e3d3"/>
</radialGradient>
</defs>
<rect width="960" height="962" fill="#c3ece9"/>
<circle cx="530" cy="312" r="16" fill="#fff"/>
<ellipse cx="272" cy="835" rx="196" ry="27" fill="#6ac5c2"/>
<ellipse cx="712" cy="835" rx="175" ry="23" fill="#6ac5c2"/>
<ellipse cx="324" cy="829" rx="144" ry="16" fill="#3d9fa1"/>
<ellipse cx="660" cy="830" rx="112" ry="14" fill="#3d9fa1"/>
<path d="M255 790 h42 c0 25 -8 43 -21 43 c-13 0 -21 -18 -21 -43z" fill="#1b2244"/>
<path d="M382 786 h37 c0 24 -7 42 -18 42 c-12 0 -19 -18 -19 -42z" fill="#1b2244"/>
<path d="M594 796 h32 c0 22 -6 38 -16 38 c-10 0 -16 -16 -16 -38z" fill="#1b2244"/>
<path d="M695 798 h32 c0 22 -6 38 -16 38 c-10 0 -16 -16 -16 -38z" fill="#1b2244"/>
<path d="M330 370 C 440 370 502 550 502 650 C 502 760 430 815 328 815 C 225 815 149 760 149 660 C 149 550 215 370 330 370z" fill="url(#teal)"/>
<path d="M283 384 C 300 378 320 380 338 392" stroke="#5fd0cf" stroke-width="7" fill="none" stroke-linecap="round"/>
<path d="M672 360 C 785 360 848 560 848 665 C 848 770 780 822 675 822 C 570 822 502 770 502 665 C 502 560 560 360 672 360z" fill="url(#wht)"/>
<g stroke="#1b2244" stroke-width="7.5" fill="none" stroke-linecap="round">
<path d="M270 528 C 275 505 305 505 310 526"/>
<path d="M419 520 C 425 497 450 497 455 518"/>
<path d="M544 546 C 550 520 582 520 588 546"/>
<path d="M680 556 C 688 532 718 532 725 558"/>
</g>
<path d="M340 526 L390 523 C 390 550 380 563 365 563 C 350 563 340 550 340 526z" fill="#1b2244"/>
<path d="M612 553 L656 552 C 656 578 648 591 634 591 C 620 591 612 578 612 553z" fill="#1b2244"/>
<ellipse cx="366" cy="530" rx="12" ry="4" fill="#fff"/>
<ellipse cx="634" cy="558" rx="10" ry="4" fill="#fff"/>
<ellipse cx="365" cy="555" rx="12" ry="6" fill="#f0847f"/>
<ellipse cx="634" cy="582" rx="10" ry="6" fill="#f0847f"/>
<ellipse cx="267" cy="550" rx="22" ry="13" fill="#f0827d" opacity="0.9"/>
<ellipse cx="457" cy="535" rx="18" ry="12" fill="#f0827d" opacity="0.9"/>
<ellipse cx="546" cy="559" rx="17" ry="11" fill="#f49f9b" opacity="0.9"/>
<ellipse cx="719" cy="574" rx="19" ry="12" fill="#f49f9b" opacity="0.9"/>
<g fill="#ffffff">
<ellipse cx="135" cy="824" rx="24" ry="10"/><ellipse cx="163" cy="837" rx="30" ry="15"/><ellipse cx="201" cy="857" rx="11" ry="5"/><ellipse cx="99" cy="832" rx="6" ry="4"/>
<ellipse cx="803" cy="824" rx="28" ry="20"/><ellipse cx="850" cy="835" rx="28" ry="14"/><ellipse cx="766" cy="847" rx="25" ry="11"/>
<ellipse cx="412" cy="868" rx="12" ry="5"/><circle cx="130" cy="752" r="3"/><circle cx="855" cy="750" r="3"/>
</g>
<path d="M440 872 C 455 855 480 858 500 856 C 530 852 560 858 585 868 C 575 880 540 884 500 884 C 470 884 448 882 440 872z" fill="#f3da85"/>
<ellipse cx="502" cy="845" rx="29" ry="20" fill="#ee8f2c"/>
<path d="M525 848 l22 -10 l-6 14 l6 14z" fill="#ee8f2c"/>
<circle cx="495" cy="838" r="5" fill="#fff" opacity="0.8"/>
<g fill="#2a3040"><circle cx="385" cy="866" r="2"/><circle cx="568" cy="875" r="1.5"/><circle cx="630" cy="872" r="2"/></g>
</svg><div style="position:absolute;left:2578px;top:1809px;width:236px;height:41px;background:#0b2456;border-radius:21px"></div><div class="t" id="t56" style="left:2609px;top:1820.5px;font-size:19px;line-height:19px;color:#ffffff;font-weight:400;">Made with <b>GAMMA</b></div><div class="t" id="t57" style="left:761px;top:1874.2px;font-size:19.5px;line-height:19.5px;color:#3f4577;font-weight:400;">Крім того, ця комбінація посіла друге місце за кількістю госпіталізацій серед усіх агентів та продуктів, що спричиняють харчові отруєння. Це вимагає посиленого контролю та</div><div style="position:absolute;left:490px;top:1902px;width:2517px;height:2px;background:#d4d4d4"></div><div class="t" id="t58" style="left:31px;top:1918.8px;font-size:19.5px;line-height:19.5px;color:#444;font-weight:400;">Слайд 5 из 10</div><svg style="position:absolute;left:196px;top:1912px;" width="34" height="34" viewBox="0 0 34 34">
<path d="M2 4 h12 l3 3 l3 -3 h12 v22 h-12 l-3 3 l-3 -3 h-12z" fill="none" stroke="#777" stroke-width="1.6"/>
<path d="M17 7 v22" stroke="#777" stroke-width="1.3"/>
<path d="M20 24 l10 -12 l3 3 l-10 12z" fill="#888"/>
</svg><div class="t" id="t59" style="left:259px;top:1918.8px;font-size:19.5px;line-height:19.5px;color:#444;font-weight:400;">русский (Украина)</div><svg style="position:absolute;left:1998px;top:1914px;" width="30" height="28" viewBox="0 0 30 28"><path d="M8 10 l7 -7 l7 7z" fill="#555"/><path d="M3 14 h24 M3 19 h24 M3 24 h18" stroke="#666" stroke-width="1.8"/></svg><div class="t" id="t60" style="left:2034px;top:1918.8px;font-size:19.5px;line-height:19.5px;color:#444;font-weight:400;">Заметки</div><svg style="position:absolute;left:2146px;top:1912px;" width="34" height="34" viewBox="0 0 34 34"><path d="M2 3 h26 v18 h-16 l-7 7 v-7 h-3z" fill="#666"/></svg><div class="t" id="t61" style="left:2182px;top:1918.8px;font-size:19.5px;line-height:19.5px;color:#444;font-weight:400;">Примечания</div><div style="position:absolute;left:2337px;top:1906px;width:78px;height:44px;background:#c6c6c6"></div><svg style="position:absolute;left:2337px;top:1906px;" width="360" height="44" viewBox="0 0 360 44">
<g fill="none" stroke="#666" stroke-width="1.8">
<rect x="26" y="9" width="26" height="25"/><path d="M31 9 v25 M31 29 h21"/><rect x="36" y="13" width="11" height="8"/>
<rect x="107" y="9" width="10" height="9"/><rect x="121" y="9" width="10" height="9"/><rect x="107" y="23" width="10" height="9"/><rect x="121" y="23" width="10" height="9"/>
<path d="M180 11 h16 v22 h-16z M196 11 h16 v22 h-16z M184 15 h8 M184 19 h8 M184 23 h8 M184 27 h8 M200 15 h8 M200 19 h8 M200 23 h8 M200 27 h8"/>
<path d="M258 10 h28 M261 10 v13 h22 v-13 M272 23 v12 M265 36 h14"/>
</g></svg><div style="position:absolute;left:2664px;top:1927px;width:15px;height:2px;background:#555"></div><div style="position:absolute;left:2689px;top:1928px;width:196px;height:1px;background:#9a9a9a"></div><div style="position:absolute;left:2752px;top:1915px;width:11px;height:27px;background:#666"></div><div style="position:absolute;left:2787px;top:1922px;width:1px;height:12px;background:#9a9a9a"></div><svg style="position:absolute;left:2893px;top:1918px;" width="20" height="20" viewBox="0 0 20 20"><path d="M10 1 v18 M1 10 h18" stroke="#555" stroke-width="2"/></svg><div class="t" id="t62" style="left:2936px;top:1918.5px;font-size:20px;line-height:20px;color:#444;font-weight:400;">72%</div><svg style="position:absolute;left:2997px;top:1915px;" width="28" height="28" viewBox="0 0 28 28"><rect x="3" y="3" width="22" height="22" fill="none" stroke="#666" stroke-width="1.6"/><path d="M14 6 v4 M14 18 v4 M6 14 h4 M18 14 h4" stroke="#666" stroke-width="1.6"/></svg><div style="position:absolute;left:83px;top:673px;width:331px;height:188px;background:#fff;border:1.5px solid #cfcfcf;overflow:hidden"></div><svg style="position:absolute;left:84px;top:674px;" width="329" height="186" viewBox="0 0 329 186">
<clipPath id="c1"><rect x="2" y="2" width="121" height="182"/></clipPath>
<g clip-path="url(#c1)">
<rect x="2" y="2" width="121" height="182" fill="#9db2c6"/>
<circle cx="12" cy="5" r="30" fill="#b2d6e0"/>
<circle cx="125" cy="172" r="34" fill="#9ccad3"/>
</g>
<rect x="14" y="46" width="4" height="138" fill="#d6ecf0"/>
<circle cx="16" cy="45" r="3" fill="#3c8fa0"/>
<path d="M19 50 C 45 48 70 52 113 54 V 113 C 80 110 50 108 19 112z" fill="#2a9cb4"/>
<path d="M19 50 C 35 49 50 50 65 51 V 110 C 50 109 35 110 19 112z" fill="#8fdde0"/>
<path d="M22 50 H 47 L 50 80 L 47 110 H 22z" fill="#f5f4e2"/>
<path d="M36 72 v16 M28 80 h16" stroke="#7fcbd0" stroke-width="5.5"/>
<path d="M89 92 l-8 -8 a5 5 0 0 1 8 -5 a5 5 0 0 1 8 5z" fill="#f07272"/>
<path d="M108 58 c4 6 5 8 5 10 a5 5 0 0 1 -10 0 c0 -2 1 -4 5 -10z" fill="#ffffff"/>
<g fill="#8fd8e0"><circle cx="76" cy="68" r="1.5"/><circle cx="90" cy="66" r="1.5"/><circle cx="102" cy="74" r="1.5"/><circle cx="104" cy="88" r="1.5"/><circle cx="100" cy="100" r="1.5"/><circle cx="86" cy="103" r="1.5"/><circle cx="74" cy="96" r="1.5"/><circle cx="72" cy="82" r="1.5"/></g>
<path d="M65 108 C 80 112 100 114 113 113 V 116 C 95 118 80 116 65 112z" fill="#1e6f8a"/>
<text x="140" y="84.5" font-size="9.5" font-weight="bold" fill="#3a3f6e" font-family="Liberation Sans" textLength="157" lengthAdjust="spacingAndGlyphs">Звіт ЄС One Health 2023 (2025):</text><text x="140" y="96.5" font-size="9.5" font-weight="bold" fill="#3a3f6e" font-family="Liberation Sans" textLength="110" lengthAdjust="spacingAndGlyphs">Зоонози в центрі уваги</text>
<rect x="288" y="175" width="34" height="6" rx="3" fill="#1d2b5e"/>
</svg><div style="position:absolute;left:83px;top:899px;width:331px;height:188px;background:#fff;border:1.5px solid #cfcfcf;overflow:hidden"></div><svg style="position:absolute;left:84px;top:900px;" width="329" height="186" viewBox="0 0 329 186">
<text x="16" y="25" font-size="9.5" font-weight="bold" fill="#3a3f6e" font-family="Liberation Sans" textLength="152" lengthAdjust="spacingAndGlyphs">Що таке зоонози і чому це важливо?</text>
<clipPath id="c2"><rect x="204" y="0" width="125" height="186"/></clipPath>
<g clip-path="url(#c2)">
<rect x="204" y="0" width="125" height="186" fill="#8cc3bb"/>
<circle cx="225" cy="20" r="26" fill="#5a9f97"/>
<circle cx="315" cy="25" r="26" fill="#b8ddd5"/>
<ellipse cx="250" cy="70" rx="28" ry="30" fill="#e9c46e"/>
<ellipse cx="292" cy="112" rx="20" ry="26" fill="#e4a74a"/>
<ellipse cx="245" cy="145" rx="22" ry="25" fill="#f4f4ee"/>
<ellipse cx="295" cy="178" rx="35" ry="14" fill="#4f9d92"/>
<rect x="226" y="100" width="7" height="45" fill="#2f6a6c"/>
<ellipse cx="320" cy="150" rx="12" ry="14" fill="#e8f2ee"/>
</g>
<g fill="#fff" stroke="#d4d9d9" stroke-width="1">
<rect x="16" y="46" width="86" height="66" rx="2"/><rect x="104" y="46" width="86" height="66" rx="2"/><rect x="16" y="115" width="86" height="55" rx="2"/>
</g>
<g fill="#3aa38a"><rect x="16" y="46" width="3" height="66"/><rect x="104" y="46" width="3" height="66"/><rect x="16" y="115" width="3" height="55"/></g>
<g stroke="#4a4f7e" stroke-width="1.6" stroke-dasharray="8 2 5 2">
<path d="M24 56 h25 M24 65 h70 M24 71 h70 M24 77 h60 M24 83 h20"/>
<path d="M112 56 h30 M112 65 h70 M112 71 h70 M112 77 h60 M112 83 h60 M112 89 h60 M112 95 h20"/>
<path d="M24 124 h50 M24 132 h50 M24 138 h66 M24 144 h66 M24 150 h60 M24 157 h50"/>
</g></svg><div style="position:absolute;left:83px;top:1124px;width:331px;height:188px;background:#fff;border:1.5px solid #cfcfcf;overflow:hidden"></div><svg style="position:absolute;left:84px;top:1125px;" width="329" height="186" viewBox="0 0 329 186">
<text x="16" y="22.5" font-size="9" font-weight="bold" fill="#3a3f6e" font-family="Liberation Sans" textLength="241" lengthAdjust="spacingAndGlyphs">Найпоширеніші зоонози 2023: рейтинг хвороб, що вражають</text>
<g fill="#dff3f1" stroke="#b7dcd8" stroke-width="1">
<rect x="18" y="44" width="14" height="22" rx="7"/><rect x="18" y="71" width="14" height="22" rx="7"/><rect x="18" y="98" width="14" height="22" rx="7"/><rect x="18" y="124" width="14" height="22" rx="7"/><rect x="18" y="151" width="14" height="22" rx="7"/>
</g>
<g stroke="#4a4f7e" stroke-width="1.6" stroke-dasharray="14 4 8 3">
<path d="M36 50 h40" stroke-width="1.5"/><path d="M36 58 h250"/>
<path d="M36 77 h30" stroke-width="1.5"/><path d="M36 85 h170"/>
<path d="M36 104 h80" stroke-width="1.5"/><path d="M36 112 h180"/>
<path d="M36 130 h20" stroke-width="1.5"/><path d="M36 140 h150"/>
<path d="M36 157 h20" stroke-width="1.5"/><path d="M36 167 h180"/>
</g>
<rect x="290" y="159" width="34" height="6" rx="3" fill="#1d2b5e"/>
</svg><div style="position:absolute;left:83px;top:1349px;width:331px;height:188px;background:#fff;border:1.5px solid #cfcfcf;overflow:hidden"></div><svg style="position:absolute;left:84px;top:1350px;" width="329" height="186" viewBox="0 0 329 186">
<rect x="2" y="2" width="121" height="182" fill="#4eb1ad"/>
<path d="M10 153 L 10 146 C 40 130 60 120 80 108 C 95 98 105 80 117 59 V 153z" fill="#c9ede2"/>
<path d="M10 153 C 40 146 60 138 80 128 C 95 120 105 115 117 114 V 153z" fill="#a8e0cf"/>
<path d="M10 138 C 20 133 30 128 40 126 L 55 124 C 65 110 80 100 95 92 L 117 44" stroke="#eef9f6" stroke-width="2.5" fill="none"/>
<path d="M110 44 l8 -4 l-1 9z" fill="#eef9f6"/>
<circle cx="104" cy="29" r="4.5" fill="#f2d070"/>
<g fill="#d9f1ee"><ellipse cx="91" cy="37" rx="7" ry="3.5"/><ellipse cx="71" cy="51" rx="5" ry="3"/><ellipse cx="80" cy="58" rx="6" ry="3"/><ellipse cx="59" cy="82" rx="4" ry="2.5"/><ellipse cx="42" cy="91" rx="6" ry="3"/><ellipse cx="25" cy="110" rx="6" ry="3.5"/><ellipse cx="35" cy="103" rx="3" ry="2"/></g>
<g fill="#f2d070"><circle cx="65" cy="73" r="3"/><circle cx="29" cy="81" r="3"/></g>
<rect x="4" y="152" width="118" height="2.5" fill="#2e7d78"/>
<text x="140" y="64" font-size="10" font-weight="bold" fill="#3a3f6e" font-family="Liberation Sans" textLength="164" lengthAdjust="spacingAndGlyphs">Лістеріоз: Найвищий рівень за 15</text><text x="140" y="77" font-size="10" font-weight="bold" fill="#3a3f6e" font-family="Liberation Sans" textLength="26" lengthAdjust="spacingAndGlyphs">років</text>
<g stroke="#3a3f6e" stroke-width="2.2" stroke-dasharray="10 1 7 1">
<path d="M140 89 h169 M140 97 h142 M140 104 h150 M140 111.5 h160 M140 122.5 h168 M140 131 h158"/>
</g>
<rect x="288" y="175" width="34" height="6" rx="3" fill="#1d2b5e"/>
<path d="M224 63 v27 l6 -6 l5 10 l4 -2 l-5 -10 h9z" fill="#fff" stroke="#222" stroke-width="1.5"/>
</svg><div style="position:absolute;left:80px;top:1571px;width:337px;height:195px;background:#c8472b"></div><div style="position:absolute;left:85px;top:1576px;width:327px;height:185px;background:#fff"></div><svg style="position:absolute;left:85px;top:1576px;" width="327" height="185" viewBox="0 0 327 185">
<text x="15" y="18.5" font-size="9" font-weight="bold" fill="#3a3f6e" font-family="Liberation Sans" textLength="150" lengthAdjust="spacingAndGlyphs">Сальмонела та яйця: небезпечна пара</text>
<g fill="#d8f3ef" stroke="#bfe2dc" stroke-width="1">
<rect x="15" y="31" width="144" height="27" rx="2"/><rect x="15" y="62" width="144" height="27" rx="2"/><rect x="15" y="93" width="144" height="33" rx="2"/>
</g>
<g stroke="#4a4f7e" stroke-width="1.5" stroke-dasharray="9 2 5 2">
<path d="M18 37 h40" stroke-width="1.2"/><path d="M18 46 h130 M18 51 h95"/>
<path d="M18 68 h50" stroke-width="1.2"/><path d="M18 77 h135 M18 82 h90"/>
<path d="M18 99 h40" stroke-width="1.2"/><path d="M18 107 h130 M18 112 h130"/>
</g>
<rect x="168" y="31" width="143" height="142" fill="#c3ece9"/>
<ellipse cx="240" cy="154" rx="62" ry="4" fill="#5cb8b6"/>
<ellipse cx="216" cy="121" rx="26" ry="34" fill="#3aa2a6"/>
<ellipse cx="268" cy="119" rx="25" ry="36" fill="#fbfbf6"/>
<g stroke="#1b2244" stroke-width="1.5" fill="none"><path d="M205 112 a3 3 0 0 1 6 0 M222 110 a3 3 0 0 1 6 0 M258 113 a3 3 0 0 1 6 0 M273 114 a3 3 0 0 1 6 0"/></g>
<g fill="#f08a84"><circle cx="203" cy="117" r="3"/><circle cx="230" cy="115" r="3"/><circle cx="256" cy="118" r="3"/><circle cx="281" cy="120" r="3"/></g>
<circle cx="248" cy="80" r="2.5" fill="#fff"/>
<rect x="290" y="175" width="34" height="6" rx="3" fill="#1d2b5e"/>
</svg><div style="position:absolute;left:83px;top:1799px;width:331px;height:107px;background:#fff;border:1.5px solid #cfcfcf;border-bottom:none"></div><svg style="position:absolute;left:84px;top:1800px;" width="329" height="106" viewBox="0 0 329 106">
<text x="16" y="20.5" font-size="9" font-weight="bold" fill="#3a3f6e" font-family="Liberation Sans" textLength="126" lengthAdjust="spacingAndGlyphs">Кампілобактер і контроль якості</text>
<g stroke="#4a4f7e" stroke-width="1.5" stroke-dasharray="9 2 6 2">
<path d="M180 35 h60" stroke-width="1.2"/><path d="M180 55 h125 M180 60 h120 M180 66 h120 M180 72 h20"/>
<path d="M183 83 h50" stroke-width="1.2"/><path d="M180 93 h130 M180 98 h125 M180 104 h90"/>
</g>
<path d="M31 80 C 31 68 40 64 60 63 L 125 60 C 140 62 142 72 142 107 H 31z" fill="#c2e7e3"/>
<rect x="82" y="62" width="22" height="20" rx="6" fill="#f6f6f4"/>
<ellipse cx="92" cy="102" rx="30" ry="12" fill="#f3e6c8"/>
<circle cx="92" cy="99" r="3" fill="#e07a3a"/>
<path d="M40 100 L52 86" stroke="#3aa59a" stroke-width="3"/>
<ellipse cx="132" cy="100" rx="10" ry="8" fill="#7ccfc0"/>
</svg><div style="position:absolute;left:3255px;top:239px;width:400px;height:225px;background:#232323;border-radius:16px 16px 0 0"></div><div style="position:absolute;left:3261px;top:409px;width:394px;height:50px;background:#2b2b2b;border-radius:12px"></div><svg style="position:absolute;left:3268px;top:419px" width="34" height="34" viewBox="0 0 34 34">
<path d="M10 8 a6.5 6.5 0 0 1 13 0 v12 h-13z" fill="#e5524f"/>
<path d="M14 20 h5 v5 h4 v3 h-13 v-3 h4z" fill="#e5524f"/>
<line x1="1.5" y1="31.5" x2="32.5" y2="0.5" stroke="#2a2a2a" stroke-width="5"/>
<line x1="1.5" y1="31.5" x2="32.5" y2="0.5" stroke="#e5524f" stroke-width="2.4" stroke-linecap="round"/>
</svg><div class="t" id="t63" style="left:3316px;top:421.2px;font-size:31.5px;line-height:31.5px;color:#ffffff;font-weight:400;">Стороженко Іван Іван...</div><div class="t" id="t64" style="left:3278px;top:554.0px;font-size:44px;line-height:44px;color:#ffffff;font-weight:700;">Serhii Honcharov</div><div style="position:absolute;left:3261px;top:635px;width:299px;height:48px;background:#2a2a2a;border-radius:12px"></div><svg style="position:absolute;left:3268px;top:644px" width="34" height="34" viewBox="0 0 34 34">
<path d="M10 8 a6.5 6.5 0 0 1 13 0 v12 h-13z" fill="#e5524f"/>
<path d="M14 20 h5 v5 h4 v3 h-13 v-3 h4z" fill="#e5524f"/>
<line x1="1.5" y1="31.5" x2="32.5" y2="0.5" stroke="#2a2a2a" stroke-width="5"/>
<line x1="1.5" y1="31.5" x2="32.5" y2="0.5" stroke="#e5524f" stroke-width="2.4" stroke-linecap="round"/>
</svg><div class="t" id="t65" style="left:3316px;top:646.2px;font-size:31.5px;line-height:31.5px;color:#ffffff;font-weight:400;">Serhii Honcharov</div><div class="t" id="t66" style="left:3277px;top:779.0px;font-size:44px;line-height:44px;color:#ffffff;font-weight:700;">Борсукова  Гал...</div><div style="position:absolute;left:3261px;top:859px;width:394px;height:50px;background:#2a2a2a;border-radius:12px"></div><svg style="position:absolute;left:3268px;top:868px" width="34" height="34" viewBox="0 0 34 34">
<path d="M10 8 a6.5 6.5 0 0 1 13 0 v12 h-13z" fill="#e5524f"/>
<path d="M14 20 h5 v5 h4 v3 h-13 v-3 h4z" fill="#e5524f"/>
<line x1="1.5" y1="31.5" x2="32.5" y2="0.5" stroke="#2a2a2a" stroke-width="5"/>
<line x1="1.5" y1="31.5" x2="32.5" y2="0.5" stroke="#e5524f" stroke-width="2.4" stroke-linecap="round"/>
</svg><div class="t" id="t67" style="left:3316px;top:870.2px;font-size:31.5px;line-height:31.5px;color:#ffffff;font-weight:400;">Борсукова Галина Сер...</div><div class="t" id="t68" style="left:3266px;top:1003.0px;font-size:44px;line-height:44px;color:#ffffff;font-weight:700;">михайло  дерев...</div><div style="position:absolute;left:3261px;top:1084px;width:351px;height:50px;background:#2a2a2a;border-radius:12px"></div><svg style="position:absolute;left:3268px;top:1093px" width="34" height="34" viewBox="0 0 34 34">
<path d="M10 8 a6.5 6.5 0 0 1 13 0 v12 h-13z" fill="#e5524f"/>
<path d="M14 20 h5 v5 h4 v3 h-13 v-3 h4z" fill="#e5524f"/>
<line x1="1.5" y1="31.5" x2="32.5" y2="0.5" stroke="#2a2a2a" stroke-width="5"/>
<line x1="1.5" y1="31.5" x2="32.5" y2="0.5" stroke="#e5524f" stroke-width="2.4" stroke-linecap="round"/>
</svg><div class="t" id="t69" style="left:3316px;top:1094.2px;font-size:31.5px;line-height:31.5px;color:#ffffff;font-weight:400;">михайло дерев'янко</div><svg style="position:absolute;left:3255px;top:1139px;" width="400" height="225" viewBox="0 0 400 225">
<defs><filter id="bl1"><feGaussianBlur stdDeviation="1.2"/></filter>
<linearGradient id="wood" x1="0" x2="1"><stop offset="0" stop-color="#75604f"/><stop offset="0.5" stop-color="#826c5c"/><stop offset="1" stop-color="#7a6555"/></linearGradient></defs>
<rect width="400" height="225" fill="url(#wood)"/>
<g filter="url(#bl1)">
<g stroke="#5e4b3e" stroke-width="2" opacity="0.6">
<path d="M40 0 L45 225 M105 0 L112 225 M170 0 L178 225 M240 0 L250 225 M310 0 L322 225 M375 0 L388 225"/>
</g>
<path d="M65 18 L169 0 L176 75 L69 95z" fill="#1b2038"/>
<path d="M71 22 L165 6 L171 71 L74 89z" fill="#e4e0da"/>
<path d="M202 0 L327 0 L334 38 L212 67z" fill="#1b2038"/>
<path d="M208 0 L322 0 L328 33 L216 61z" fill="#e6e3dd"/>
<path d="M144 118 L259 97 L272 184 L150 206z" fill="#5c6b78"/>
<path d="M150 123 L254 103 L266 179 L155 200z" fill="#e2dfd9"/>
<g stroke="#9a9690" stroke-width="1.5" opacity="0.7">
<path d="M95 40 h40 M90 55 h60 M92 70 h55 M230 15 h70 M232 30 h65 M175 140 h50 M170 155 h70 M172 170 h60"/>
</g>
<path d="M0 150 C 20 160 28 190 25 225 H0z" fill="#1e1a1a"/>
<path d="M0 180 C 10 190 15 210 12 225 H0z" fill="#c8b0a8" opacity="0.6"/>
</g>
</svg><svg style="position:absolute;left:3255px;top:1364px;" width="400" height="223" viewBox="0 0 400 223">
<defs><filter id="bl2" x="-10%" y="-10%" width="120%" height="120%"><feGaussianBlur stdDeviation="2.2"/></filter>
<radialGradient id="face2" cx="0.45" cy="0.3" r="0.75"><stop offset="0" stop-color="#efe6e3"/><stop offset="0.35" stop-color="#d9c6c0"/><stop offset="0.7" stop-color="#b8978d"/><stop offset="1" stop-color="#8a6a60"/></radialGradient></defs>
<rect width="400" height="223" fill="#dcdcdc"/>
<g filter="url(#bl2)">
<rect x="0" y="0" width="400" height="223" fill="#dedede"/>
<path d="M0 0 H240 V30 L0 20z" fill="#e6e6e6"/>
<path d="M0 20 L173 50 V66 L0 36z" fill="#c9c9c9"/>
<path d="M0 36 L173 66 V223 H0z" fill="#e2e2e2"/>
<rect x="166" y="8" width="23" height="215" fill="#e9e9e9"/>
<rect x="164" y="60" width="4" height="163" fill="#cfcfcf"/>
<rect x="189" y="8" width="50" height="215" fill="#dadada"/>
<rect x="222" y="128" width="22" height="26" fill="#9b8060"/>
<path d="M0 77 C 40 80 80 100 92 130 L 100 223 H0z" fill="#14171b"/>
<path d="M232 223 C 228 170 226 90 240 45 C 255 10 300 -5 400 -5 V223z" fill="url(#face2)"/>
<path d="M300 0 H400 V 110 C 390 80 370 60 340 40 C 320 28 305 15 300 0z" fill="#8d8d8d"/>
<path d="M238 50 C 242 25 258 12 275 8 C 262 25 250 40 244 60z" fill="#9a9a9a"/>
<path d="M378 85 C 392 90 400 100 400 110 V150 C 390 145 382 130 378 120z" fill="#c9a89e"/>
<path d="M246 131 C 250 150 262 165 280 165 C 270 150 265 140 262 130z" fill="#b08a80"/>
<path d="M300 192 C 330 185 345 170 352 160 L 400 140 V223 H300z" fill="#24304c"/>
<path d="M290 223 C 300 205 320 195 345 192 L 340 223z" fill="#7e665e"/>
</g>
<g stroke="#34302e" stroke-width="2.2" fill="none" opacity="0.85">
<path d="M214 109 L 222 112 M298 122 L 381 83"/>
<path d="M220 110 L 246 117 L 244 131 C 232 132 222 126 220 110z"/>
<path d="M250 116 L 300 121 L 297 141 C 275 142 256 137 250 130z"/>
</g>
</svg><svg style="position:absolute;left:3257px;top:1591px;" width="396" height="221" viewBox="0 0 396 221">
<defs><filter id="bl3" x="-10%" y="-10%" width="120%" height="120%"><feGaussianBlur stdDeviation="2.2"/></filter>
<radialGradient id="face3" cx="0.45" cy="0.35" r="0.7"><stop offset="0" stop-color="#d8b6a6"/><stop offset="0.6" stop-color="#c29684"/><stop offset="1" stop-color="#94705f"/></radialGradient>
<linearGradient id="bg3" x1="0" x2="1"><stop offset="0" stop-color="#9c9c9c"/><stop offset="0.3" stop-color="#aaaaaa"/><stop offset="0.7" stop-color="#b4b4b4"/><stop offset="0.85" stop-color="#c6c9c8"/><stop offset="0.96" stop-color="#b8b8b4"/><stop offset="1" stop-color="#857b6e"/></linearGradient></defs>
<rect width="396" height="221" fill="url(#bg3)"/>
<g filter="url(#bl3)">
<path d="M134 110 C 130 70 160 45 206 40 C 250 38 278 58 284 100 L 286 145 C 276 110 262 92 240 86 C 200 78 160 85 140 120z" fill="#4d3b31"/>
<path d="M140 120 C 142 95 170 80 205 80 C 245 80 272 95 280 125 C 285 160 278 200 262 221 H 148 C 138 190 136 150 140 120z" fill="url(#face3)"/>
<path d="M276 138 C 288 140 290 165 282 176 L 276 170z" fill="#b88c7a"/>
<path d="M186 174 C 198 170 218 170 228 176 C 225 188 214 194 206 194 C 196 194 188 186 186 174z" fill="#5a3e36"/>
<path d="M255 200 C 290 190 340 200 370 221 H 245z" fill="#19191c"/>
<path d="M172 221 C 185 205 220 205 240 221z" fill="#2a2222" opacity="0.7"/>
</g>
<g stroke="#5a3c34" stroke-width="3" fill="none" opacity="0.55">
<path d="M160 135 C 170 130 182 130 190 135"/><path d="M220 132 C 230 127 243 127 252 132"/>
</g>
</svg><div style="position:absolute;left:3253px;top:1587px;width:404px;height:229px;border:4px solid #2fe58b"></div><svg style="position:absolute;left:3255px;top:1816px;" width="400" height="223" viewBox="0 0 400 223">
<defs><filter id="bl4" x="-10%" y="-10%" width="120%" height="120%"><feGaussianBlur stdDeviation="2"/></filter>
<radialGradient id="face4" cx="0.45" cy="0.35" r="0.7"><stop offset="0" stop-color="#e2cfc6"/><stop offset="0.6" stop-color="#cdb0a2"/><stop offset="1" stop-color="#a38375"/></radialGradient>
<pattern id="stripe" width="30" height="223" patternUnits="userSpaceOnUse"><rect width="30" height="223" fill="#d2d2d2"/><path d="M8 0 C 22 50 2 110 14 160 C 20 190 10 210 12 223" stroke="#a2a2a2" stroke-width="6" fill="none"/></pattern>
<clipPath id="cr4"><path d="M0 0 H400 V210 a13 13 0 0 1 -13 13 H13 a13 13 0 0 1 -13 -13z"/></clipPath></defs>
<g clip-path="url(#cr4)">
<rect width="400" height="223" fill="url(#stripe)"/>
<g filter="url(#bl4)">
<rect x="0" y="0" width="54" height="223" fill="#15171c"/>
<rect x="0" y="90" width="38" height="8" fill="#bdbdbd"/>
<path d="M123 0 H160 V40 H118z" fill="#2f4a9a"/>
<path d="M118 16 L 132 16 L 104 165 L 88 165z" fill="#c9a826"/>
<path d="M118 62 C 125 25 175 10 210 14 C 250 20 272 60 272 98 L 255 95 C 240 60 200 45 160 50 C 140 55 125 62 118 62z" fill="#8b8b8b"/>
<path d="M114 95 C 118 55 160 40 200 42 C 245 45 268 75 270 110 C 272 150 262 190 240 223 H 120 C 112 180 110 130 114 95z" fill="url(#face4)"/>
<path d="M253 120 C 272 118 280 140 272 168 L 255 168z" fill="#c9a393"/>
<path d="M112 160 C 150 150 200 160 256 200 L 256 223 H 112z" fill="#c4a090"/>
<path d="M240 165 C 255 160 280 162 290 170 L 290 223 H 235z" fill="#3b3232"/>
<path d="M288 172 C 320 165 370 170 384 190 L 384 223 H 288z" fill="#c8312d"/>
</g>
<g stroke="#2a2626" stroke-width="3.5" fill="none">
<path d="M85 104 L 264 115"/>
<path d="M92 105 L 157 110 L 150 141 C 120 142 100 138 95 132z"/>
<path d="M158 110 L 212 112 L 208 149 C 190 150 168 148 158 140z"/>
</g>
</g>
</svg><div style="position:absolute;left:3261px;top:1310px;width:394px;height:48px;background:rgba(0,0,0,0.5);border-radius:12px"></div><svg style="position:absolute;left:3268px;top:1320px" width="34" height="34" viewBox="0 0 34 34">
<path d="M10 8 a6.5 6.5 0 0 1 13 0 v12 h-13z" fill="#e5524f"/>
<path d="M14 20 h5 v5 h4 v3 h-13 v-3 h4z" fill="#e5524f"/>
<line x1="1.5" y1="31.5" x2="32.5" y2="0.5" stroke="rgba(0,0,0,0)" stroke-width="5"/>
<line x1="1.5" y1="31.5" x2="32.5" y2="0.5" stroke="#e5524f" stroke-width="2.4" stroke-linecap="round"/>
</svg><div class="t" id="t70" style="left:3316px;top:1322.2px;font-size:31.5px;line-height:31.5px;color:#ffffff;font-weight:400;">Корнієнко Раїса Бори...</div><div style="position:absolute;left:3261px;top:1535px;width:303px;height:49px;background:rgba(0,0,0,0.5);border-radius:12px"></div><svg style="position:absolute;left:3268px;top:1545px" width="34" height="34" viewBox="0 0 34 34">
<path d="M10 8 a6.5 6.5 0 0 1 13 0 v12 h-13z" fill="#e5524f"/>
<path d="M14 20 h5 v5 h4 v3 h-13 v-3 h4z" fill="#e5524f"/>
<line x1="1.5" y1="31.5" x2="32.5" y2="0.5" stroke="rgba(0,0,0,0)" stroke-width="5"/>
<line x1="1.5" y1="31.5" x2="32.5" y2="0.5" stroke="#e5524f" stroke-width="2.4" stroke-linecap="round"/>
</svg><div class="t" id="t71" style="left:3316px;top:1546.2px;font-size:31.5px;line-height:31.5px;color:#ffffff;font-weight:400;">Ткаченко Андрій</div><div style="position:absolute;left:3261px;top:1760px;width:235px;height:49px;background:rgba(0,0,0,0.5);border-radius:12px"></div><div class="t" id="t72" style="left:3270px;top:1771.2px;font-size:31.5px;line-height:31.5px;color:#ffffff;font-weight:400;">Valerii Ushkalov</div><div style="position:absolute;left:3261px;top:1984px;width:330px;height:49px;background:rgba(0,0,0,0.5);border-radius:12px"></div><svg style="position:absolute;left:3268px;top:1994px" width="34" height="34" viewBox="0 0 34 34">
<path d="M10 8 a6.5 6.5 0 0 1 13 0 v12 h-13z" fill="#e5524f"/>
<path d="M14 20 h5 v5 h4 v3 h-13 v-3 h4z" fill="#e5524f"/>
<line x1="1.5" y1="31.5" x2="32.5" y2="0.5" stroke="rgba(0,0,0,0)" stroke-width="5"/>
<line x1="1.5" y1="31.5" x2="32.5" y2="0.5" stroke="#e5524f" stroke-width="2.4" stroke-linecap="round"/>
</svg><div class="t" id="t73" style="left:3316px;top:1996.2px;font-size:31.5px;line-height:31.5px;color:#ffffff;font-weight:400;">Олексій Жемердєй</div></body></html>
